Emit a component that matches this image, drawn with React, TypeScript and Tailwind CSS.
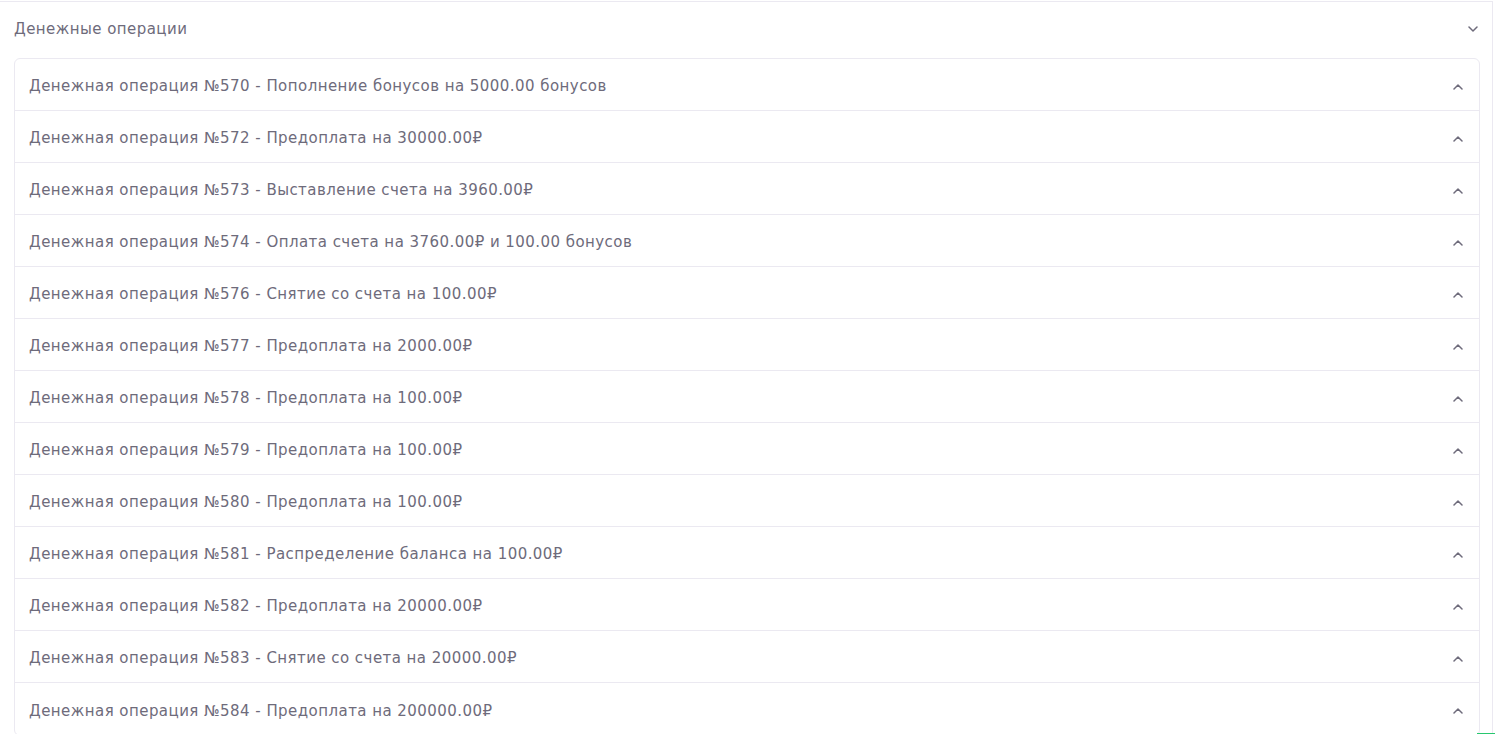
const operations = [
  'Денежная операция №570 - Пополнение бонусов на 5000.00 бонусов',
  'Денежная операция №572 - Предоплата на 30000.00₽',
  'Денежная операция №573 - Выставление счета на 3960.00₽',
  'Денежная операция №574 - Оплата счета на 3760.00₽ и 100.00 бонусов',
  'Денежная операция №576 - Снятие со счета на 100.00₽',
  'Денежная операция №577 - Предоплата на 2000.00₽',
  'Денежная операция №578 - Предоплата на 100.00₽',
  'Денежная операция №579 - Предоплата на 100.00₽',
  'Денежная операция №580 - Предоплата на 100.00₽',
  'Денежная операция №581 - Распределение баланса на 100.00₽',
  'Денежная операция №582 - Предоплата на 20000.00₽',
  'Денежная операция №583 - Снятие со счета на 20000.00₽',
  'Денежная операция №584 - Предоплата на 200000.00₽',
]

function Chevron({ up }: { up?: boolean }) {
  return (
    <svg width="10" height="6" viewBox="0 0 10 6" fill="none" className="shrink-0">
      <path
        d={up ? 'M1 5L5 1L9 5' : 'M1 1L5 5L9 1'}
        stroke="#6e6b7b"
        strokeWidth="1.5"
        strokeLinecap="round"
        strokeLinejoin="round"
      />
    </svg>
  )
}

export default function App() {
  return (
    <div className="relative h-[734px] overflow-hidden bg-white pt-px" style={{ fontFamily: '"DejaVu Sans", sans-serif' }}>
      <div className="w-[1493px] border-t border-r border-[#ebe9f1] text-[15px] tracking-[0.45px] text-[#6e6b7b]">
        <div className="flex h-[56px] items-center justify-between pb-[2px] pl-[14px] pr-[14px]">
          <span>Денежные операции</span>
          <Chevron />
        </div>
        <div className="ml-[14px] w-[1466px] rounded-md border border-[#ebe9f1]">
          {operations.map(op => (
            <div key={op} className="flex h-[52px] items-center justify-between border-b border-[#ebe9f1] pl-[14px] pr-[16px] pt-[4px] last:border-b-0">
              <span>{op}</span>
              <Chevron up />
            </div>
          ))}
        </div>
      </div>
      <div className="absolute bottom-0 right-0 h-px w-[18px] bg-[#28c76f]" />
    </div>
  )
}
